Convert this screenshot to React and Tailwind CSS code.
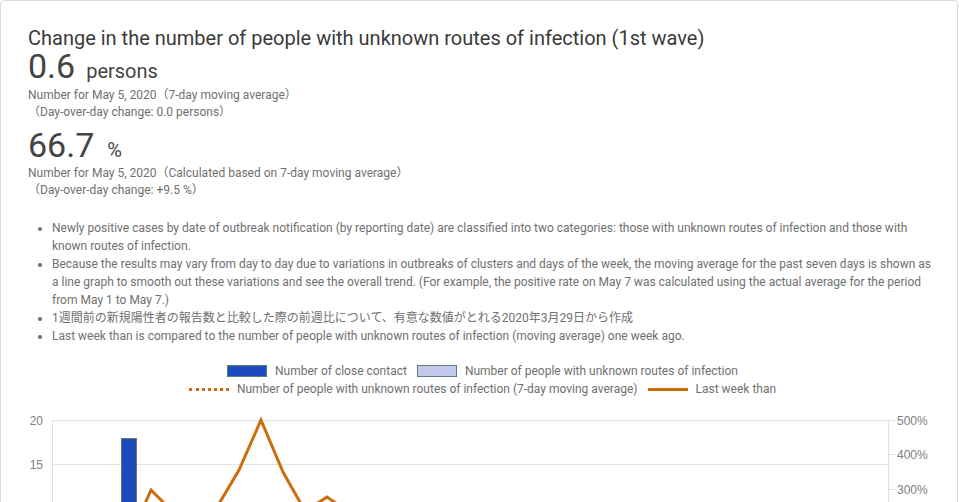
import React from "react";

const ORANGE = "#cc6c0c";

function Chart() {
  const ox = 28;
  const oy = 397;
  const px = (x) => x - ox;
  const py = (y) => y - oy;
  const pts = [
    [129, 540],
    [151, 490],
    [173, 512],
    [195, 530],
    [217, 507],
    [239, 470],
    [261, 420],
    [283, 472],
    [305, 511],
    [327, 497],
    [349, 512],
    [371, 525],
  ];
  const d = pts.map((p, i) => `${i ? "L" : "M"}${px(p[0])} ${py(p[1])}`).join(" ");
  return (
    <svg width="902" height="200" className="block" style={{ fontFamily: "'Liberation Sans', Arial, sans-serif" }}>
      <line x1={px(52)} y1={py(420.5)} x2={px(888)} y2={py(420.5)} stroke="#e1e1e1" strokeWidth="1" />
      <line x1={px(52)} y1={py(464.5)} x2={px(888)} y2={py(464.5)} stroke="#e1e1e1" strokeWidth="1" />
      <line x1={px(52)} y1={py(508.5)} x2={px(888)} y2={py(508.5)} stroke="#e1e1e1" strokeWidth="1" />
      <line x1={px(52.5)} y1={py(420)} x2={px(52.5)} y2={200} stroke="#e1e1e1" strokeWidth="1" />
      <line x1={px(888.5)} y1={py(420)} x2={px(888.5)} y2={200} stroke="#e1e1e1" strokeWidth="1" />
      {[420.5, 454.5, 489.5].map((y) => (
        <line key={y} x1={px(888)} y1={py(y)} x2={px(896)} y2={py(y)} stroke="#e1e1e1" strokeWidth="1" />
      ))}
      <text x={px(43)} y={py(424.5)} textAnchor="end" fontSize="12" fill="#808080">20</text>
      <text x={px(43)} y={py(468.5)} textAnchor="end" fontSize="12" fill="#808080">15</text>
      <text x={px(897)} y={py(424.5)} fontSize="12" fill="#808080">500%</text>
      <text x={px(897)} y={py(458.5)} fontSize="12" fill="#808080">400%</text>
      <text x={px(897)} y={py(493.5)} fontSize="12" fill="#808080">300%</text>
      <rect x={px(121.5)} y={py(438.5)} width="15" height="120" fill="#1d4bbf" stroke="#5a7f62" strokeWidth="1" />
      <path d={d} fill="none" stroke={ORANGE} strokeWidth="3" strokeLinejoin="miter" />
    </svg>
  );
}

export default function App() {
  const font = { fontFamily: "Roboto, 'Noto Sans CJK JP', sans-serif" };
  return (
    <div className="w-[959px] bg-white" style={font}>
      <div className="w-[958px] border border-[#dcdcdc] rounded-[4px] pl-[27px] pr-[20px] pt-[26px] pb-10 overflow-hidden">
        <h3 className="text-[20px] leading-[22px] text-[#3a3a3a] font-normal">
          Change in the number of people with unknown routes of infection (1st wave)
        </h3>
        <div className="text-[#444]">
          <div className="text-[34px] leading-[34px] h-[34px] mb-[4px] whitespace-nowrap">
            <span>0.6</span>
            <span className="text-[20px] leading-[20px] ml-[11px]">persons</span>
          </div>
          <div className="text-[12px] leading-[17px] text-[#707070]">
            Number for May 5, 2020（7-day moving average）
          </div>
          <div className="text-[12px] leading-[17px] text-[#707070]">
            （Day-over-day change: 0.0 persons）
          </div>
        </div>
        <div className="text-[#444] mt-[7px]">
          <div className="text-[34px] leading-[34px] h-[34px] mb-[3px] whitespace-nowrap">
            <span>66.7</span>
            <span className="text-[20px] leading-[20px] ml-[13px]">%</span>
          </div>
          <div className="text-[12px] leading-[17px] text-[#707070]">
            Number for May 5, 2020（Calculated based on 7-day moving average）
          </div>
          <div className="text-[12px] leading-[17px] text-[#707070]">
            （Day-over-day change: +9.5 %）
          </div>
        </div>
        <ul className="mt-[20px] pl-[24px] list-disc text-[12px] leading-[18px] text-[#707070] marker:text-[#707070]">
          <li>
            Newly positive cases by date of outbreak notification (by reporting date) are classified into two categories: those with unknown routes of infection and those with known routes of infection.
          </li>
          <li>
            Because the results may vary from day to day due to variations in outbreaks of clusters and days of the week, the moving average for the past seven days is shown as a line graph to smooth out these variations and see the overall trend. (For example, the positive rate on May 7 was calculated using the actual average for the period from May 1 to May 7.)
          </li>
          <li>1週間前の新規陽性者の報告数と比較した際の前週比について、有意な数値がとれる2020年3月29日から作成</li>
          <li>Last week than is compared to the number of people with unknown routes of infection (moving average) one week ago.</li>
        </ul>
        <div className="mt-[17px] flex flex-col items-center text-[12px] leading-[18px] text-[#707070]">
          <div className="flex items-center gap-[10px]">
            <div className="flex items-center gap-[8px]">
              <span className="block w-[40px] h-[12px] bg-[#1d4bbf] border border-[#5a7f62]" />
              <span>Number of close contact</span>
            </div>
            <div className="flex items-center gap-[8px]">
              <span className="block w-[40px] h-[12px] bg-[#c3c9ee] border border-[#5a7f62]" />
              <span>Number of people with unknown routes of infection</span>
            </div>
          </div>
          <div className="flex items-center gap-[10px]">
            <div className="flex items-center gap-[8px]">
              <span className="block w-[40px] h-[3px] border-t-[3px] border-dotted border-[#cc6c0c]" />
              <span>Number of people with unknown routes of infection (7-day moving average)</span>
            </div>
            <div className="flex items-center gap-[8px]">
              <span className="block w-[40px] h-[3px] bg-[#cc6c0c]" />
              <span>Last week than</span>
            </div>
          </div>
        </div>
        <div className="-mt-[1px]">
          <Chart />
        </div>
      </div>
    </div>
  );
}
